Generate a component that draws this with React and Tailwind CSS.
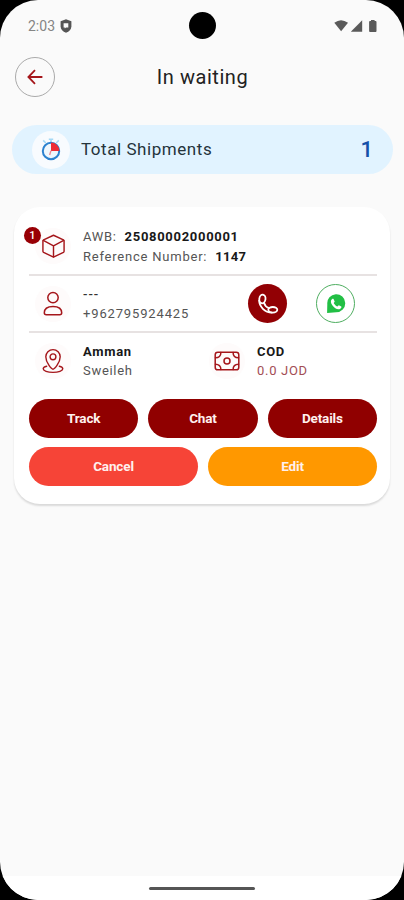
import React from 'react';

const stroke = {
  fill: 'none',
  stroke: '#a5161b',
  strokeWidth: 1.5,
  strokeLinecap: 'round',
  strokeLinejoin: 'round',
};

function BoxIcon() {
  return (
    <svg width="25" height="26" viewBox="0 0 26 26" {...stroke}>
      <path d="M13 1.8 23.3 6.6Q24 7 24 7.8V18.4Q24 19.2 23.3 19.6L13 24.6 2.7 19.6Q2 19.2 2 18.4V7.8Q2 7 2.7 6.6Z" />
      <path d="M2.4 7.2 13 12.8 23.6 7.2M13 12.8V24.2" />
    </svg>
  );
}

function PersonIcon() {
  return (
    <svg width="24" height="26" viewBox="0 0 24 26" {...stroke}>
      <circle cx="12" cy="6.6" r="5.2" />
      <path d="M3.3 21.8C3.3 17.6 6.8 15.4 12 15.4S20.7 17.6 20.7 21.8Q20.7 23.8 18.7 23.8H5.3Q3.3 23.8 3.3 21.8Z" />
    </svg>
  );
}

function PinIcon() {
  return (
    <svg width="24" height="26" viewBox="0 0 24 26" {...stroke} strokeWidth="1.4">
      <path d="M12 21.2C10.6 21.2 4.8 14.5 4.8 8.8A7.2 7.2 0 0 1 19.2 8.8C19.2 14.5 13.4 21.2 12 21.2Z" />
      <circle cx="12" cy="8.8" r="2.9" />
      <path d="M5.7 18.2C3.2 18.8 2.2 19.8 2.2 20.7 2.2 22.8 6.5 24.4 12 24.4S21.8 22.8 21.8 20.7C21.8 19.8 20.8 18.8 18.3 18.2" />
    </svg>
  );
}

function MoneyIcon() {
  return (
    <svg width="26" height="20" viewBox="0 0 26 20" {...stroke}>
      <rect x="1.2" y="1.2" width="23.6" height="17.6" rx="2.6" />
      <circle cx="13" cy="10" r="3" />
      <path d="M1.5 6.8C4.8 6.8 6.9 4.8 6.9 1.5M24.5 6.8C21.2 6.8 19.1 4.8 19.1 1.5M1.5 13.2C4.8 13.2 6.9 15.2 6.9 18.5M24.5 13.2C21.2 13.2 19.1 15.2 19.1 18.5" />
    </svg>
  );
}

function StopwatchIcon() {
  return (
    <svg width="24" height="24" viewBox="0 0 24 24" fill="none">
      <path d="M4.2 2.4 6.8 5M19.8 2.4 17.2 5M12 1V4M9.8 1.2H14.2" stroke="#a5d9f5" strokeWidth="1.6" />
      <circle cx="12" cy="13" r="8.2" fill="#eef7fd" stroke="#2c82cf" strokeWidth="2" />
      <path d="M12 13V4.6A8.4 8.4 0 0 1 20.4 13Z" fill="#ee2b35" />
      <path d="M12 12.6 10.6 17" stroke="#e88a94" strokeWidth="1.4" />
    </svg>
  );
}

function PhoneIcon() {
  return (
    <svg width="22" height="22" viewBox="0 0 22 22" fill="none" stroke="#fff" strokeWidth="1.8" strokeLinecap="round" strokeLinejoin="round">
      <path d="M2.2 7.6C2.2 13.4 7.8 19.6 14.8 19.6" />
      <ellipse cx="5.4" cy="6" rx="3.1" ry="4.3" transform="rotate(8 5.4 6)" />
      <ellipse cx="15.8" cy="16.8" rx="4.5" ry="2.8" />
      <path d="M7 9.8C7.6 12 9.6 14.4 12 15.2" />
    </svg>
  );
}

function WhatsAppIcon() {
  return (
    <svg width="20" height="20" viewBox="0 0 20 20">
      <path d="M1.1 19 1.3 10A9 9 0 1 1 10.3 18.2Z" fill="#22bf45" />
      <path
        d="M6.1 5C4.2 6.6 4.7 9.2 6.5 11.5 8.6 14.3 11.6 16 14 14.9 15.4 14.3 15.6 13.2 15.3 12.6L12.8 11.2 11.4 12.6C9.7 12 8.4 10.6 7.7 9.1L8.7 7.7 7.7 5.2C7.3 4.7 6.6 4.7 6.1 5Z"
        fill="#fff"
      />
    </svg>
  );
}

function StatusBar() {
  return (
    <div className="flex h-[51px] items-center justify-between pl-7 pr-[27px] text-[#555]">
      <div className="flex w-[79px] items-center gap-[5px]">
        <span className="text-[14px] leading-none text-[#858585]">2:03</span>
        <svg width="12" height="14" viewBox="0 0 12 14">
          <path d="M6 .3 11.4 2.2V7.2C11.4 10.3 9.2 12.6 6 13.8 2.8 12.6.6 10.3.6 7.2V2.2Z" fill="#555" />
          <path d="M3.6 4.3H8.3V8.4H6L4.8 9.6V8.4H3.6Z" fill="#fafafa" />
        </svg>
      </div>
      <div className="size-[27px] rounded-full bg-black"></div>
      <div className="flex w-20 items-center justify-end">
        <svg width="43" height="14" viewBox="0 0 43 14" fill="#5a5a5a">
          <path d="M.3 3.8Q7-1.3 14 3.8L7.1 12.2Z" />
          <path d="M28.2 1.2V12.8H16.8Z" />
          <path d="M37 .9H40.6V2H41.6Q42.5 2 42.5 2.9V12Q42.5 12.9 41.6 12.9H36Q35.1 12.9 35.1 12V2.9Q35.1 2 36 2H37Z" />
        </svg>
      </div>
    </div>
  );
}

function RowIcon({ children }) {
  return (
    <div className="flex size-9 shrink-0 items-center justify-center rounded-full bg-[#fefbfb]">
      {children}
    </div>
  );
}

function PillButton({ label, color }) {
  return (
    <button className={`h-[39px] flex-1 rounded-full text-[13.5px] font-bold tracking-[-0.15px] text-[#fff0ee] ${color}`}>
      {label}
    </button>
  );
}

function ShipmentCard() {
  return (
    <section className="mx-[14px] mt-[33px] h-[297px] rounded-[26px] bg-white pl-[15px] pr-[13px] pt-[18px] text-[13px] leading-[19px] tracking-[0.7px] text-[#555] shadow-[0_2px_2px_rgba(0,0,0,0.13)]">
      {/* AWB + reference */}
      <div className="flex h-[51px] border-b-2 border-[#e7e2e2]">
        <div className="relative ml-[6px] mt-[3px] h-9">
          <RowIcon><BoxIcon /></RowIcon>
          <span className="absolute -left-[11px] -top-px flex size-[17px] items-center justify-center rounded-full bg-[#980005] text-[11px] font-medium tracking-normal text-white">
            1
          </span>
        </div>
        <div className="ml-3 mt-[2px]">
          <p>AWB: <b className="ml-[4px] font-bold tracking-[0.7px] text-[#181818]">25080002000001</b></p>
          <p className="mt-px tracking-[0.78px]">Reference Number: <b className="ml-[4px] font-bold tracking-[0.3px] text-[#181818]">1147</b></p>
        </div>
      </div>

      {/* Receiver */}
      <div className="flex h-[57px] items-center border-b-2 border-[#e7e2e2] pl-[6px]">
        <RowIcon><PersonIcon /></RowIcon>
        <div className="ml-3 w-[165px]">
          <p className="font-medium tracking-[1px] text-[#333]">---</p>
          <p className="tracking-[0.85px]">+962795924425</p>
        </div>
        <button className="flex size-[39px] items-center justify-center rounded-full bg-[#920004]">
          <PhoneIcon />
        </button>
        <button className="ml-[29px] flex size-[39px] items-center justify-center rounded-full border border-[#4fae61]">
          <WhatsAppIcon />
        </button>
      </div>

      {/* Destination + cash on delivery */}
      <div className="flex h-[56px] items-center pl-[6px]">
        <RowIcon><PinIcon /></RowIcon>
        <div className="ml-3 w-[126px]">
          <p className="font-bold text-[#181818]">Amman</p>
          <p>Sweileh</p>
        </div>
        <RowIcon><MoneyIcon /></RowIcon>
        <div className="ml-3">
          <p className="font-bold text-[#181818]">COD</p>
          <p className="text-[#a34d55]">0.0 JOD</p>
        </div>
      </div>

      <div className="mt-[10px] flex gap-[10px]">
        <PillButton label="Track" color="bg-[#900000]" />
        <PillButton label="Chat" color="bg-[#900000]" />
        <PillButton label="Details" color="bg-[#900000]" />
      </div>
      <div className="mt-[9px] flex gap-[10px]">
        <PillButton label="Cancel" color="bg-[#f64437]" />
        <PillButton label="Edit" color="bg-[#ff9800]" />
      </div>
    </section>
  );
}

export default function App() {
  return (
    <div className="h-[900px] w-[404px] overflow-hidden bg-black font-[Roboto,sans-serif]">
      <div className="flex h-full flex-col overflow-hidden rounded-[38px] bg-[#fafafa]">
        <StatusBar />

        <header className="mt-[6px] flex h-10 items-center px-[15px]">
          <button className="flex size-10 items-center justify-center rounded-full border border-[#aaa]">
            <svg width="16" height="16" viewBox="0 0 16 16" fill="none" stroke="#a5161b" strokeWidth="1.8">
              <path d="M8 1.2 1.4 8 8 14.8M1.4 8H15.4" />
            </svg>
          </button>
          <h1 className="flex-1 pr-[39px] text-center text-[20px] tracking-[0.55px] text-[#222]">In waiting</h1>
        </header>

        <div className="ml-3 mr-[11px] mt-7 flex h-[49px] items-center rounded-full bg-[#e1f3ff] px-5">
          <div className="flex size-[38px] items-center justify-center rounded-full bg-[#f8fbfe]">
            <StopwatchIcon />
          </div>
          <span className="ml-[11px] flex-1 text-[17px] tracking-[0.55px] text-[#25333b]">Total Shipments</span>
          <span className="text-[22px] font-medium text-[#1550a8]">1</span>
        </div>

        <ShipmentCard />

        {/* gesture bar */}
        <div className="mt-auto flex h-6 shrink-0 items-center justify-center bg-white">
          <div className="h-[3px] w-[106px] rounded-full bg-[#555]"></div>
        </div>
      </div>
    </div>
  );
}
